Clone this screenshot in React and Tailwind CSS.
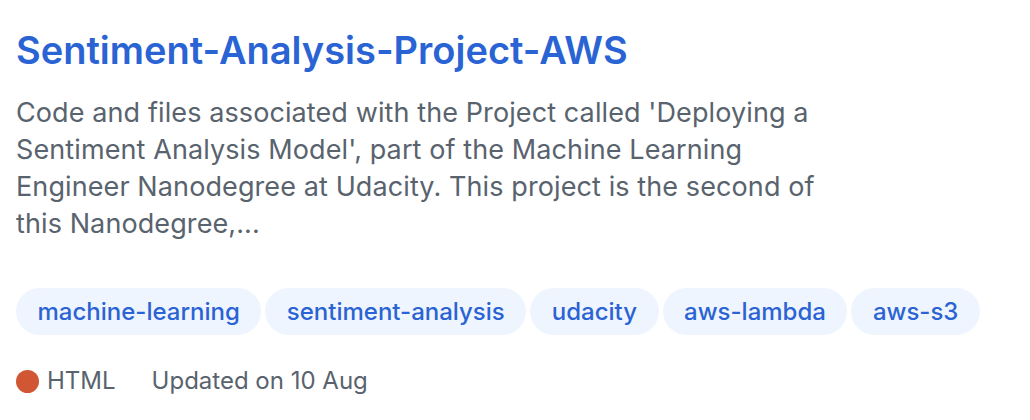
export default function App() {
  const tags = ["machine-learning", "sentiment-analysis", "udacity", "aws-lambda", "aws-s3"];
  return (
    <div className="w-[1030px] h-[420px] bg-white overflow-hidden font-['Inter',sans-serif] px-4 pt-[28px]">
      <h3 className="text-[38px] leading-[44px] font-semibold text-[#2a63d3]">
        Sentiment-Analysis-Project-AWS
      </h3>
      <p className="mt-[22px] max-w-[840px] text-[27px] leading-[37px] tracking-[0.1px] text-[#59636e]">
        Code and files associated with the Project called 'Deploying a Sentiment Analysis Model', part of the Machine Learning Engineer Nanodegree at Udacity. This project is the second of this Nanodegree,...
      </p>
      <div className="mt-[46px] flex gap-[4px]">
        {tags.map((t) => (
          <span key={t} className="h-[47px] px-[21.5px] rounded-full bg-[#eff5fe] text-[#2a63d3] text-[24px] font-medium flex items-center">
            {t}
          </span>
        ))}
      </div>
      <div className="mt-[31px] h-[30px] flex items-center text-[24px] text-[#59636e]">
        <span className="w-[23px] h-[23px] rounded-full bg-[#d15634] mr-[8px]"></span>
        <span>HTML</span>
        <span className="ml-[36px]">Updated on 10 Aug</span>
      </div>
    </div>
  );
}
